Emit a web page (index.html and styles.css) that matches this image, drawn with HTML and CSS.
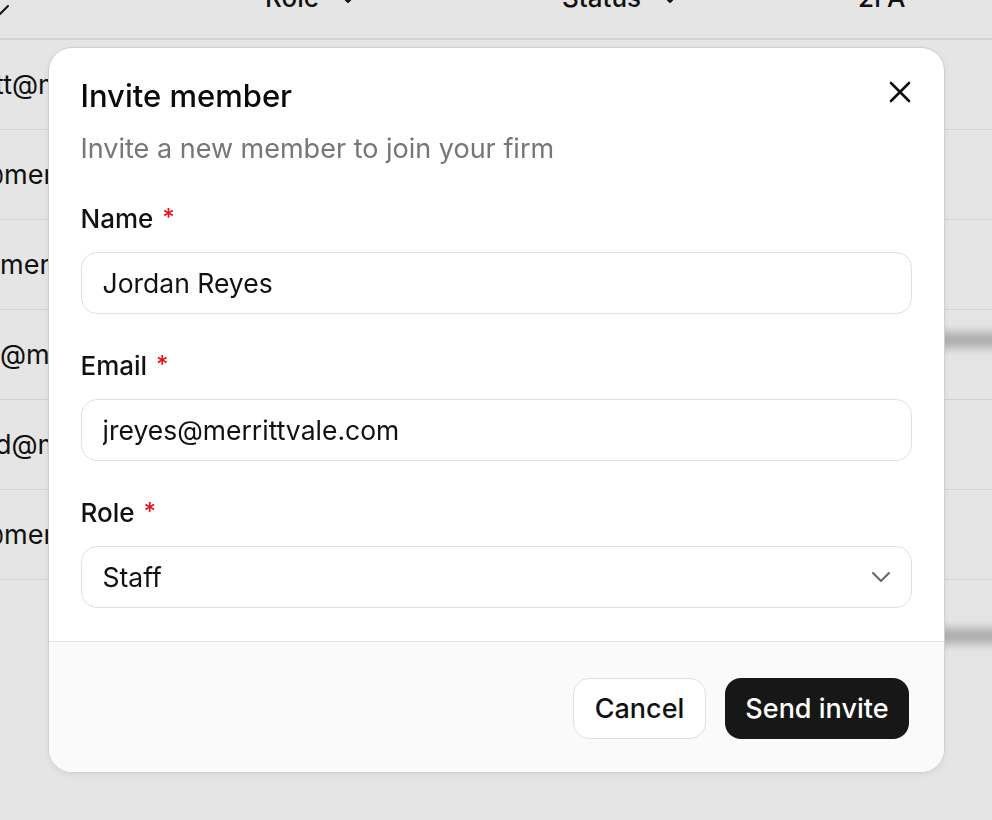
FILE: index.html
```html
<!DOCTYPE html>
<html lang="en">
<head>
  <meta charset="UTF-8">
  <meta name="viewport" content="width=device-width, initial-scale=1.0">
  <title>Members</title>
  <link rel="stylesheet" href="styles.css">
</head>
<body>
  <div class="members">
    <div class="members-head">
      <div class="th th-email">
        <svg class="sort" viewBox="0 0 18 10"><path d="M1 1l8 8 8-8"/></svg>
      </div>
      <div class="th">Role <svg class="sort" viewBox="0 0 18 10"><path d="M1 1l8 8 8-8"/></svg></div>
      <div class="th">Status <svg class="sort" viewBox="0 0 18 10"><path d="M1 1l8 8 8-8"/></svg></div>
      <div class="th">2FA</div>
    </div>
    <div class="members-row"><div class="td email">tt@merrittvale.com</div></div>
    <div class="members-row"><div class="td email cut-at">@merrittvale.com</div></div>
    <div class="members-row"><div class="td email flush">merrittvale.com</div></div>
    <div class="members-row"><div class="td email flush">@merrittvale.com</div></div>
    <div class="members-row"><div class="td email">d@merrittvale.com</div></div>
    <div class="members-row"><div class="td email cut-at">@merrittvale.com</div></div>
    <div class="ghost ghost-one"></div>
    <div class="ghost ghost-two"></div>
  </div>

  <div class="overlay">
    <div class="dialog" role="dialog" aria-labelledby="invite-title">
      <div class="dialog-body">
        <div class="dialog-head">
          <h2 id="invite-title">Invite member</h2>
          <button class="close" aria-label="Close">
            <svg viewBox="0 0 24 24"><path d="M3 3l18 18M21 3L3 21"/></svg>
          </button>
        </div>
        <p class="subtitle">Invite a new member to join your firm</p>

        <div class="fields">
          <label class="field">
            <span class="label">Name <span class="req">*</span></span>
            <input class="input" type="text" value="Jordan Reyes">
          </label>
          <label class="field">
            <span class="label">Email <span class="req">*</span></span>
            <input class="input" type="email" value="jreyes@merrittvale.com">
          </label>
          <label class="field">
            <span class="label">Role <span class="req">*</span></span>
            <span class="select">
              <span>Staff</span>
              <svg viewBox="0 0 18 10"><path d="M1 1l8 8 8-8"/></svg>
            </span>
          </label>
        </div>
      </div>
      <div class="dialog-foot">
        <button class="btn btn-ghost">Cancel</button>
        <button class="btn btn-dark">Send invite</button>
      </div>
    </div>
  </div>
</body>
</html>
```

FILE: styles.css
```css
* {
  box-sizing: border-box;
}
body {
  margin: 0;
  height: 100vh;
  overflow: hidden;
  background: #e5e5e5;
  font-family: Inter, "Noto Sans", sans-serif;
  color: #111;
}

/* table behind the dialog */
.members {
  position: relative;
  height: 100%;
}
.members-head,
.members-row {
  display: grid;
  grid-template-columns: 265px 297px 296px 1fr;
}
.members-head {
  height: 40px;
  grid-template-rows: 15px;
  border-bottom: 2px solid #d2d2d2;
  align-items: end;
  padding-bottom: 23px;
}
.th {
  display: flex;
  align-items: center;
  gap: 20px;
  font-size: 26px;
  font-weight: 500;
  line-height: 34px;
}
.th-email {
  margin-left: -9px;
}
.sort {
  width: 18px;
  height: 10px;
  fill: none;
  stroke: #111;
  stroke-width: 2;
  stroke-linecap: round;
  stroke-linejoin: round;
}
.members-row {
  height: 90px;
  border-bottom: 1px solid #d2d2d2;
  align-items: center;
}
.td {
  font-size: 27px;
  line-height: 34px;
  white-space: nowrap;
}
.email {
  margin-left: -5px;
}
.email.cut-at {
  margin-left: -22px;
}
.email.flush {
  margin-left: 0;
}
.ghost {
  position: absolute;
  right: -20px;
  width: 90px;
  height: 16px;
  border-radius: 8px;
  background: #8a8a8a;
  filter: blur(4px);
  opacity: 0.6;
}
.ghost-one {
  top: 332px;
}
.ghost-two {
  top: 628px;
}

/* dialog */
.overlay {
  position: fixed;
  inset: 0;
  display: flex;
  align-items: center;
  justify-content: center;
}
.dialog {
  width: 897px;
  background: #fff;
  border: 1px solid #cfcfcf;
  border-radius: 24px;
  box-shadow: 0 2px 6px rgba(0, 0, 0, 0.06);
  overflow: hidden;
}
.dialog-body {
  padding: 30px 32px 33px;
}
.dialog-head {
  display: flex;
  justify-content: space-between;
  align-items: flex-start;
}
.dialog-head h2 {
  margin: 0;
  font-size: 31px;
  line-height: 36px;
  font-weight: 500;
  color: #0a0a0a;
}
.close {
  margin-top: 2px;
  padding: 0;
  width: 24px;
  height: 24px;
  border: none;
  background: none;
  cursor: pointer;
}
.close svg {
  width: 24px;
  height: 24px;
  fill: none;
  stroke: #111;
  stroke-width: 2.6;
  stroke-linecap: round;
  overflow: visible;
}
.subtitle {
  margin: 18px 0 0;
  font-size: 27px;
  line-height: 34px;
  color: #767676;
}
.fields {
  margin-top: 36px;
  display: flex;
  flex-direction: column;
  gap: 35px;
}
.field {
  display: flex;
  flex-direction: column;
  gap: 16px;
}
.label {
  height: 34px;
  font-size: 26px;
  line-height: 34px;
  font-weight: 500;
  color: #111;
}
.req {
  color: #e5121b;
  margin-left: 2px;
  font-size: 24px;
  line-height: 0;
  vertical-align: 2px;
}
.input,
.select {
  height: 62px;
  width: 100%;
  border: 1.5px solid #e0e0e0;
  border-radius: 16px;
  padding: 0 21px;
  font-family: inherit;
  font-size: 26.5px;
  color: #111;
  background: #fff;
  outline: none;
}
.select {
  display: flex;
  align-items: center;
  justify-content: space-between;
}
.select svg {
  width: 18px;
  height: 10px;
  fill: none;
  stroke: #666;
  stroke-width: 2;
  stroke-linecap: round;
  stroke-linejoin: round;
}

.dialog-foot {
  display: flex;
  justify-content: flex-end;
  gap: 19px;
  padding: 36px 35px 33px;
  background: #fafafa;
  border-top: 1px solid #e6e6e6;
}
.btn {
  height: 61px;
  border-radius: 16px;
  font-family: inherit;
  font-size: 27px;
  font-weight: 500;
  cursor: pointer;
}
.btn-ghost {
  padding: 0 21px;
  background: #fff;
  color: #111;
  border: 1.5px solid #e0e0e0;
}
.btn-dark {
  padding: 0 20px;
  background: #171717;
  color: #fff;
  border: none;
}
```
